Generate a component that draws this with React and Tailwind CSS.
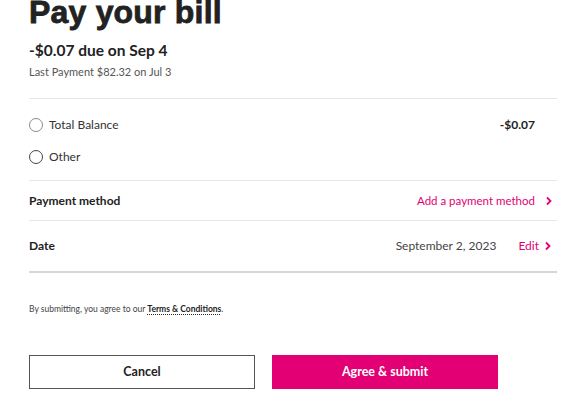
function Chevron({ className }) {
  return (
    <svg className={className} width="8" height="10" viewBox="0 0 8 10" fill="none">
      <path d="M2 1.5 L5.5 5 L2 8.5" stroke="currentColor" strokeWidth="1.8" />
    </svg>
  );
}

function Radio({ label, dark }) {
  return (
    <label className="flex items-center gap-[6px] h-[32px]">
      <span
        className={`w-[14px] h-[14px] rounded-full border bg-white ${dark ? "border-[#444]" : "border-[#8a8a8a]"}`}
      />
      <span className="text-[12px] text-[#333]">{label}</span>
    </label>
  );
}

export default function App() {
  return (
    <div className="w-[576px] h-[400px] overflow-hidden bg-white font-['Lato',sans-serif] text-[#222]">
      <div className="pl-[29px] pr-[19px]">
        <h1 className="mt-[-4px] font-['Liberation_Sans',Arial,sans-serif] font-bold text-[32px] leading-none text-[#222] tracking-[0.2px] [-webkit-text-stroke:0.8px_#222]">
          Pay your bill
        </h1>
        <div className="mt-[12px] text-[15.5px] font-bold leading-[20px]">-$0.07 due on Sep 4</div>
        <div className="mt-[4px] text-[11px] text-[#555] leading-[16px]">Last Payment $82.32 on Jul 3</div>

        <div className="mt-[18px] border-t border-[#e6e6e6]" />

        <div className="pt-[10px] pb-[7px]">
          <div className="flex items-center justify-between">
            <Radio label="Total Balance" />
            <span className="text-[12px] font-bold mr-[22px]">-$0.07</span>
          </div>
          <Radio label="Other" dark />
        </div>

        <div className="border-t border-[#e6e6e6]" />

        <div className="flex items-center justify-between h-[39px]">
          <span className="text-[12px] font-bold">Payment method</span>
          <span className="flex items-center gap-[10px] text-[11.5px] text-[#e20074] mr-[4px]">
            Add a payment method
            <Chevron />
          </span>
        </div>

        <div className="border-t border-[#e6e6e6]" />

        <div className="flex items-center justify-between h-[50px]">
          <span className="text-[12px] font-bold">Date</span>
          <span className="flex items-center text-[12px] mr-[5px]">
            <span className="text-[#444]">September 2, 2023</span>
            <span className="ml-[22px] text-[#e20074]">Edit</span>
            <Chevron className="ml-[5px] text-[#e20074]" />
          </span>
        </div>

        <div className="border-t-2 border-[#d6d6d6]" />

        <p className="mt-[30px] text-[8.5px] text-[#444] leading-[12px]">
          By submitting, you agree to our{" "}
          <span className="font-bold text-[#222] underline decoration-dotted underline-offset-2">
            Terms &amp; Conditions
          </span>
          .
        </p>

        <div className="mt-[40px] flex gap-[17px]">
          <button className="w-[226px] h-[34px] border border-[#555] bg-white text-[12.5px] font-bold text-[#222]">
            Cancel
          </button>
          <button className="w-[226px] h-[34px] bg-[#e20074] text-[12.5px] font-bold text-white">
            Agree &amp; submit
          </button>
        </div>
      </div>
    </div>
  );
}
